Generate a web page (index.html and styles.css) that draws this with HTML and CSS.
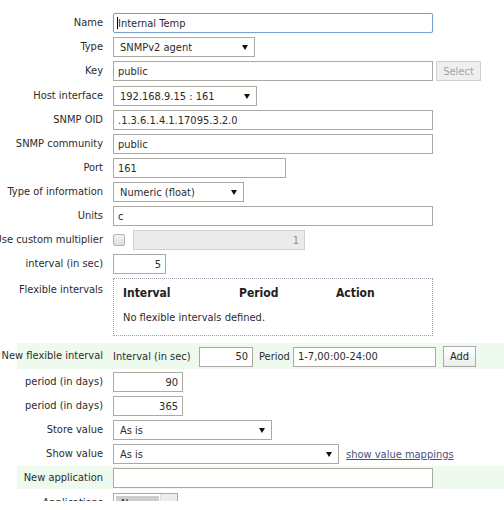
FILE: index.html
```html
<!DOCTYPE html>
<html>
<head>
<meta charset="utf-8">
<title>Item</title>
<link rel="stylesheet" href="styles.css">
</head>
<body>
<div class="page">
  <div class="form">
    <div class="row">
      <div class="lbl"><span class="lt">Name</span></div>
      <div class="fld"><span class="caretwrap"><input class="txt w320 focus" type="text" value="Internal Temp"><span class="caret"></span></span></div>
    </div>
    <div class="row">
      <div class="lbl"><span class="lt">Type</span></div>
      <div class="fld"><span class="sel w142"><select><option>SNMPv2 agent</option></select></span></div>
    </div>
    <div class="row">
      <div class="lbl"><span class="lt">Key</span></div>
      <div class="fld"><input class="txt w320" type="text" value="public"><button class="btn dis selbtn" type="button">Select</button></div>
    </div>
    <div class="row r-host">
      <div class="lbl"><span class="lt">Host interface</span></div>
      <div class="fld"><span class="sel w144"><select><option>192.168.9.15 : 161</option></select></span></div>
    </div>
    <div class="row">
      <div class="lbl"><span class="lt">SNMP OID</span></div>
      <div class="fld"><input class="txt w320" type="text" value=".1.3.6.1.4.1.17095.3.2.0"></div>
    </div>
    <div class="row">
      <div class="lbl"><span class="lt">SNMP community</span></div>
      <div class="fld"><input class="txt w320" type="text" value="public"></div>
    </div>
    <div class="row">
      <div class="lbl"><span class="lt">Port</span></div>
      <div class="fld"><input class="txt w173" type="text" value="161"></div>
    </div>
    <div class="row">
      <div class="lbl"><span class="lt">Type of information</span></div>
      <div class="fld"><span class="sel w131"><select><option>Numeric (float)</option></select></span></div>
    </div>
    <div class="row">
      <div class="lbl"><span class="lt">Units</span></div>
      <div class="fld"><input class="txt w320" type="text" value="c"></div>
    </div>
    <div class="row">
      <div class="lbl"><span class="lt">Use custom multiplier</span></div>
      <div class="fld"><input class="chk" type="checkbox"><input class="txt num dis w172" type="text" value="1" disabled></div>
    </div>
    <div class="row">
      <div class="lbl"><span class="lt">interval (in sec)</span></div>
      <div class="fld"><input class="txt num w53" type="text" value="5"></div>
    </div>
    <div class="row r-tall">
      <div class="lbl"><span class="lt">Flexible intervals</span></div>
      <div class="fld">
        <div class="flexbox">
          <table class="ftable">
            <thead>
              <tr><th class="c1">Interval</th><th class="c2">Period</th><th>Action</th></tr>
            </thead>
            <tbody>
              <tr><td colspan="3">No flexible intervals defined.</td></tr>
            </tbody>
          </table>
        </div>
      </div>
    </div>
    <div class="row new r-flex">
      <div class="lbl"><span class="lt">New flexible interval</span></div>
      <div class="fld">
        <span class="inl inl-int">Interval (in sec)</span>
        <input class="txt num w54" type="text" value="50">
        <span class="inl inl-per">Period</span>
        <input class="txt w143" type="text" value="1-7,00:00-24:00">
        <button class="btn add" type="button">Add</button>
      </div>
    </div>
    <div class="row r-hist">
      <div class="lbl"><span class="lt">period (in days)</span></div>
      <div class="fld"><input class="txt num w70" type="text" value="90"></div>
    </div>
    <div class="row">
      <div class="lbl"><span class="lt">period (in days)</span></div>
      <div class="fld"><input class="txt num w70" type="text" value="365"></div>
    </div>
    <div class="row">
      <div class="lbl"><span class="lt">Store value</span></div>
      <div class="fld"><span class="sel w159"><select><option>As is</option></select></span></div>
    </div>
    <div class="row">
      <div class="lbl"><span class="lt">Show value</span></div>
      <div class="fld"><span class="sel w226"><select><option>As is</option></select></span><a class="link" href="#">show value mappings</a></div>
    </div>
    <div class="row new r-app">
      <div class="lbl"><span class="lt">New application</span></div>
      <div class="fld"><input class="txt w320" type="text" value=""></div>
    </div>
    <div class="row r-apps">
      <div class="lbl"><span class="lt">Applications</span></div>
      <div class="fld">
        <div class="lst"><div class="opt">None</div><div class="sb"></div></div>
      </div>
    </div>
  </div>
</div>
</body>
</html>
```
FILE: styles.css
```css
html, body {
  margin: 0;
  padding: 0;
  background: #ffffff;
}
body {
  font-family: "DejaVu Sans Condensed", "DejaVu Sans", sans-serif;
  font-size: 11px;
  color: #2b2b2b;
  overflow: hidden;
}
.page {
  height: 501px;
  overflow: hidden;
}
.form {
  padding-top: 11px;
}
.row {
  display: flex;
  margin-left: 17px;
  padding: 2px 0;
}
.r-host { margin-top: 1px; }
.r-flex {
  margin-top: 5px;
  padding: 3px 0 2px;
}
.r-hist { margin-top: 1px; }
.r-app { padding: 2px 0 1px; }
.r-apps { margin-top: 2px; }
.new { background: #eefaee; }

.lbl {
  flex: 0 0 96px;
  width: 96px;
  min-width: 0;
  box-sizing: border-box;
  padding-right: 10px;
  display: flex;
  justify-content: flex-end;
  line-height: 20px;
  height: 20px;
}
.lt {
  flex: none;
  white-space: nowrap;
}
.r-tall .lbl { padding-top: 2px; }
.fld {
  display: flex;
  align-items: center;
  min-width: 0;
}

.txt {
  box-sizing: border-box;
  height: 20px;
  border: 1px solid #abaaa2;
  padding: 0 4px;
  margin: 0;
  font: inherit;
  color: #2b2b2b;
  background: #ffffff;
  outline: none;
  border-radius: 0;
}
.txt.focus {
  border-color: #78a1d3;
  border-radius: 2px;
  box-shadow: 0 0 1px #9dbde3;
}
.num { text-align: right; padding-right: 4px; }
.txt.dis {
  background: #ebebeb;
  border-color: #d2d2cd;
  color: #8e8e8e;
  margin-left: 8px;
  padding-right: 5px;
}
.w320 { width: 320px; }
.w173 { width: 173px; }
.w172 { width: 172px; }
.w143 { width: 143px; }
.w70 { width: 70px; }
.w54 { width: 54px; }
.w53 { width: 53px; }

.caretwrap {
  position: relative;
  display: inline-block;
}
.caret {
  position: absolute;
  left: 4px;
  top: 4px;
  width: 1px;
  height: 12px;
  background: #000000;
}

.sel {
  position: relative;
  display: inline-block;
}
.sel select {
  appearance: none;
  -webkit-appearance: none;
  box-sizing: border-box;
  width: 100%;
  height: 20px;
  margin: 0;
  border: 1px solid #abaaa2;
  border-radius: 0;
  background: #ffffff;
  font: inherit;
  color: #2b2b2b;
  padding: 0 20px 0 6px;
  outline: none;
}
.sel::after {
  content: "";
  position: absolute;
  right: 7px;
  top: 8px;
  border-left: 3px solid transparent;
  border-right: 3px solid transparent;
  border-top: 5px solid #111111;
  pointer-events: none;
}
.w142 { width: 142px; }
.w144 { width: 144px; }
.w131 { width: 131px; }
.w159 { width: 159px; }
.w226 { width: 226px; }

.btn {
  box-sizing: border-box;
  height: 20px;
  margin: 0;
  padding: 0;
  font: inherit;
  color: #222222;
  border: 1px solid #a9a9a9;
  border-radius: 0;
  background: linear-gradient(#ffffff, #ededed);
}
.btn.dis {
  color: #a3a3a3;
  background: #efefef;
  border-color: #d0d0d0;
}
.selbtn {
  width: 45px;
  margin-left: 3px;
}
.add {
  width: 33px;
  height: 21px;
  margin-left: 7px;
}

.chk {
  appearance: none;
  -webkit-appearance: none;
  box-sizing: border-box;
  width: 12px;
  height: 12px;
  margin: 0;
  border: 1px solid #b3b3b3;
  border-radius: 2px;
  background: linear-gradient(#f4f4f4, #dcdcdc);
}

.flexbox {
  box-sizing: border-box;
  width: 320px;
  height: 58px;
  border: 1px dotted #9ea6b4;
  padding: 2px 9px 6px;
}
.ftable {
  border-collapse: collapse;
  width: 100%;
}
.ftable th {
  font-size: 12px;
  font-weight: bold;
  text-align: left;
  height: 24px;
  padding: 0;
  color: #222222;
}
.ftable td {
  height: 24px;
  padding: 0;
}
.ftable .c1 { width: 116px; }
.ftable .c2 { width: 97px; }

.inl { display: inline-block; white-space: nowrap; }
.inl-int { width: 86px; }
.inl-per { width: 34px; margin-left: 6px; }

.link {
  margin-left: 7px;
  color: #4b5079;
  text-decoration: underline;
}

.lst {
  box-sizing: border-box;
  width: 65px;
  height: 90px;
  border: 1px solid #abaaa2;
  display: flex;
  align-items: flex-start;
}
.opt {
  margin: 2px 0 0 2px;
  width: 43px;
  box-sizing: border-box;
  height: 15px;
  line-height: 15px;
  padding-left: 5px;
  background: #cdcdcd;
}
.sb {
  margin-left: auto;
  width: 16px;
  height: 100%;
  background: #ececec;
  border-left: 1px solid #dddddd;
}
```
